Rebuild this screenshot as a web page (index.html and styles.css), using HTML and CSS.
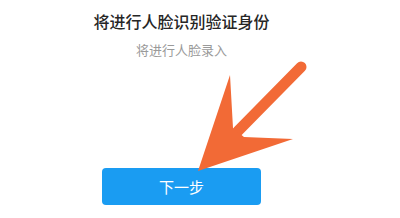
FILE: index.html
```html
<!DOCTYPE html>
<html lang="zh-CN">

<head>
    <meta charset="UTF-8">
    <meta name="viewport" content="width=device-width, initial-scale=1.0">
    <title>人脸识别</title>
    <link rel="stylesheet" href="styles.css">
</head>

<body>

    <div class="page">
        <h1 class="title">将进行人脸识别验证身份</h1>
        <p class="subtitle">将进行人脸录入</p>
        <button class="next-btn">下一步</button>
    </div>

    <!-- Pointer arrow drawn over the page -->
    <svg class="arrow" width="400" height="218" viewBox="0 0 400 218">
        <line x1="301" y1="67" x2="238" y2="131" stroke="#f26a36" stroke-width="11" stroke-linecap="round" />
        <polygon points="198,171 230,75 233,128 244,137 293,139" fill="#f26a36" />
    </svg>

</body>

</html>
```

FILE: styles.css
```css
/* Basic layout */
body {
    font-family: "Noto Sans CJK SC", "Noto Sans", sans-serif;
    background-color: #ffffff;
    margin: 0;
    padding: 0;
    position: relative;
    height: 218px;
    overflow: hidden;
}

.page {
    width: 363px;
    display: flex;
    flex-direction: column;
    align-items: center;
}

.title {
    margin: 11px 0 0;
    font-size: 16px;
    line-height: 20px;
    font-weight: 500;
    color: #262626;
}

.subtitle {
    margin: 10px 0 0;
    font-size: 13px;
    line-height: 17px;
    color: #9a9a9a;
}

.next-btn {
    margin-top: 110px;
    width: 159px;
    height: 37px;
    background-color: #1a9cf2;
    color: white;
    font-family: inherit;
    font-size: 15px;
    border: none;
    border-radius: 4px;
    padding: 0;
}

/* Arrow overlay */
.arrow {
    position: absolute;
    top: 0;
    left: 0;
    pointer-events: none;
}
```
